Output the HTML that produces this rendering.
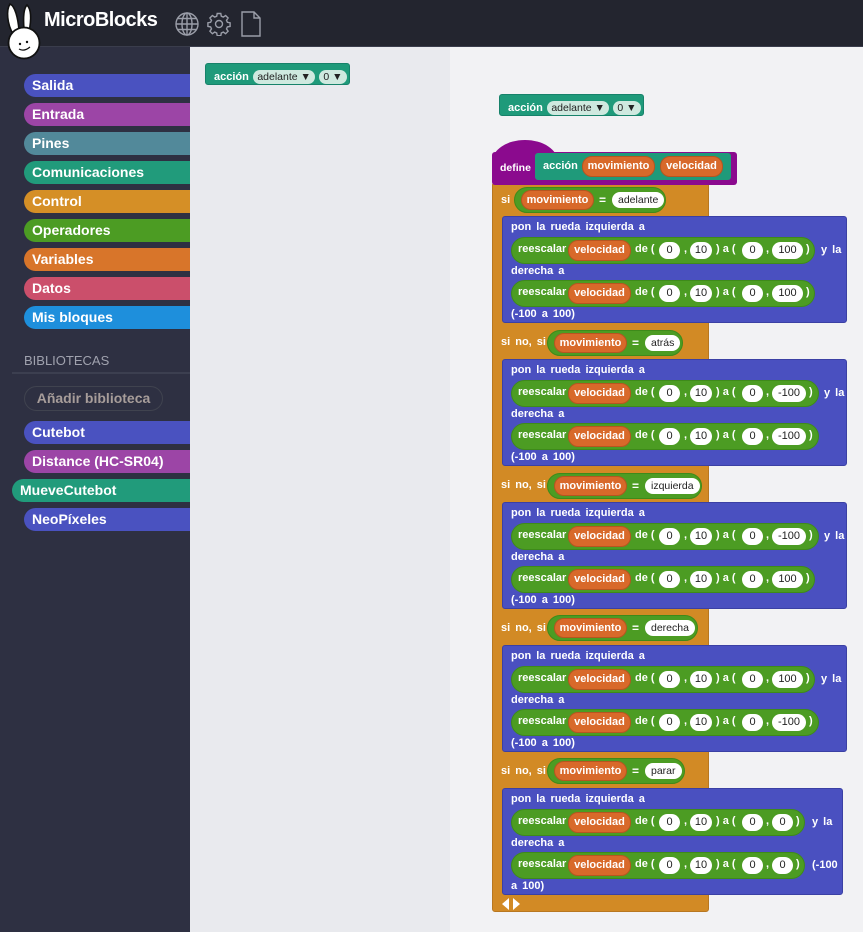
<!DOCTYPE html>
<html><head><meta charset="utf-8">
<style>
*{margin:0;padding:0;box-sizing:border-box}
body{width:863px;height:932px;overflow:hidden;background:#f2f2f4;font-family:"Liberation Sans",sans-serif;position:relative}
.abs{position:absolute}
#top{left:0;top:0;width:863px;height:47px;background:#23252f;border-bottom:1px solid #3a3d4c}
#side{left:0;top:47px;width:190px;height:885px;background:#2e3042}
#pal{left:190px;top:47px;width:260px;height:885px;background:#e9eaee}
.cat{position:absolute;left:24px;width:166px;height:23px;border-radius:12px 0 0 12px;color:#fff;font-weight:bold;font-size:14px;line-height:23px;padding-left:8px}
.b{font-weight:bold;font-size:11px;color:#fff;word-spacing:2px;white-space:nowrap}
.blue{position:absolute;left:502px;width:345px;height:107px;background:#4a50c0;border-radius:3px;border:1px solid #3b40a4}
.blue>.b{position:absolute;left:8px}
.rp{position:absolute;left:8px;height:27px;background:#4c9c23;border-radius:14px;border:1px solid #3e8a1a}
.rp .t{position:absolute;top:5px;font-weight:bold;font-size:11px;color:#fff;white-space:nowrap}
.rp .v{position:absolute;top:2px;height:21px;width:63px;background:#d8692a;border:1px solid #b65520;border-radius:10px;color:#fff;font-weight:bold;font-size:11px;line-height:19px;text-align:center}
.rp .c{position:absolute;top:4px;height:17px;background:#fff;border-radius:9px;color:#222;font-size:11px;line-height:17px;text-align:center}
.cond{position:absolute;height:26px;background:#4c9c23;border:1px solid #3e8a1a;border-radius:13px}
.cond .v{position:absolute;left:6px;top:2px;height:20px;width:73px;background:#d8692a;border:1px solid #b65520;border-radius:10px;color:#fff;font-weight:bold;font-size:11px;line-height:18px;text-align:center}
.cond .eq{position:absolute;left:84px;top:5px;color:#fff;font-weight:bold;font-size:12px}
.cond .w{position:absolute;left:97px;top:4px;height:16px;background:#fff;border-radius:8px;color:#222;font-size:10.5px;line-height:16px;padding:0 6px}
.lbl{position:absolute;font-weight:bold;font-size:11px;color:#fff;word-spacing:2px}
.dd{background:#cfe9df;border-radius:8px;color:#222;font-size:10.5px;padding:0 4px;height:14px;line-height:14px;display:inline-block}
</style></head><body>
<div class="abs" id="top"></div>
<div class="abs" id="side"></div>
<div class="abs" id="pal"></div>

<!-- logo -->
<svg class="abs" style="left:3px;top:2px" width="42" height="58" viewBox="0 0 42 58">
<path d="M10 32 C4 22 3 8 7 2 C12 4 15 16 16 28 M21 27 C20 15 21 6 24 3 C29 8 28 20 26 30" fill="#fff" stroke="#111" stroke-width="1.6"/>
<circle cx="21" cy="41" r="15.5" fill="#fff" stroke="#111" stroke-width="1.8"/>
<circle cx="17" cy="42" r="1.2" fill="#111"/><circle cx="24" cy="40" r="1.2" fill="#111"/>
<path d="M16 47 Q21 50 27 45" fill="none" stroke="#111" stroke-width="1.2"/>
</svg>
<div class="abs" style="left:44px;top:9px;color:#fff;font-weight:bold;font-size:20px;letter-spacing:-0.5px">MicroBlocks</div>
<svg class="abs" style="left:175px;top:12px" width="24" height="24" viewBox="0 0 24 24" fill="none" stroke="#9a9da8" stroke-width="1.4"><circle cx="12" cy="12" r="11"/><ellipse cx="12" cy="12" rx="5" ry="11"/><line x1="12" y1="1" x2="12" y2="23"/><line x1="1" y1="12" x2="23" y2="12"/><path d="M3 6.5H21M3 17.5H21"/></svg>
<svg class="abs" style="left:207px;top:12px" width="24" height="24" viewBox="0 0 24 24" fill="none" stroke="#9a9da8" stroke-width="1.4"><circle cx="12" cy="12" r="3.5"/><path d="M10.2 1.5h3.6l.5 2.7 2 .9 2.3-1.6 2.5 2.5-1.6 2.3.9 2 2.7.5v3.6l-2.7.5-.9 2 1.6 2.3-2.5 2.5-2.3-1.6-2 .9-.5 2.7h-3.6l-.5-2.7-2-.9-2.3 1.6-2.5-2.5 1.6-2.3-.9-2-2.7-.5v-3.6l2.7-.5.9-2-1.6-2.3 2.5-2.5 2.3 1.6 2-.9z"/></svg>
<svg class="abs" style="left:240px;top:11px" width="22" height="26" viewBox="0 0 22 26" fill="none" stroke="#9a9da8" stroke-width="1.4"><path d="M2 1h12l6 6v18H2z M14 1v6h6"/></svg>

<!-- categories -->
<div class="cat" style="top:74px;background:#4a52c0">Salida</div>
<div class="cat" style="top:103px;background:#9c45a6">Entrada</div>
<div class="cat" style="top:132px;background:#52899a">Pines</div>
<div class="cat" style="top:161px;background:#219b7b">Comunicaciones</div>
<div class="cat" style="top:190px;background:#d58f26">Control</div>
<div class="cat" style="top:219px;background:#4c9c23">Operadores</div>
<div class="cat" style="top:248px;background:#d8752a">Variables</div>
<div class="cat" style="top:277px;background:#cb4f6b">Datos</div>
<div class="cat" style="top:306px;background:#1e8fdc">Mis bloques</div>
<div class="abs" style="left:24px;top:353px;color:#a0a2ae;font-size:13px">BIBLIOTECAS</div>
<div class="abs" style="left:12px;top:372px;width:178px;height:2px;background:#3c3f50"></div>
<div class="abs" style="left:24px;top:386px;width:139px;height:25px;border:1px solid #40434f;border-radius:13px;color:#a79d9a;font-weight:bold;font-size:14px;line-height:23px;text-align:center">Añadir biblioteca</div>
<div class="cat" style="top:421px;background:#4a52c0">Cutebot</div>
<div class="cat" style="top:450px;background:#9c45a6">Distance (HC-SR04)</div>
<div class="cat" style="top:479px;left:12px;width:178px;background:#219b7b">MueveCutebot</div>
<div class="cat" style="top:508px;background:#4a52c0">NeoPíxeles</div>

<!-- palette block -->
<div class="abs" style="left:205px;top:63px;width:145px;height:22px;background:#1f9a7a;border-radius:3px;border:1px solid #17826a;padding:3px 0 0 8px" ><span class="b">acción</span> <span class="dd">adelante ▼</span> <span class="dd">0 ▼</span></div>
<div class="abs" style="left:499px;top:94px;width:145px;height:22px;background:#1f9a7a;border-radius:3px;border:1px solid #17826a;padding:3px 0 0 8px" ><span class="b">acción</span> <span class="dd">adelante ▼</span> <span class="dd">0 ▼</span></div>

<!-- orange C -->
<div class="abs" style="left:492px;top:182px;width:217px;height:730px;background:#d28a25;border-radius:3px;border:1px solid #b87720"></div>
<!-- hat -->
<div class="abs" style="left:492px;top:140px;width:66px;height:40px;background:#8b0a8e;border-radius:33px 33px 0 0 / 22px 22px 0 0"></div>
<div class="abs" style="left:492px;top:152px;width:245px;height:33px;background:#8b0a8e;border-radius:3px"></div>
<div class="lbl" style="left:500px;top:162px;font-size:10.5px">define</div>
<div class="abs" style="left:535px;top:153px;width:196px;height:27px;background:#1f9a7a;border-radius:3px"></div>
<div class="lbl" style="left:543px;top:160px">acción</div>
<div class="abs" style="left:582px;top:156px;width:73px;height:21px;background:#d8692a;border:1px solid #b65520;border-radius:10px;color:#fff;font-weight:bold;font-size:11px;line-height:19px;text-align:center">movimiento</div>
<div class="abs" style="left:660px;top:156px;width:63px;height:21px;background:#d8692a;border:1px solid #b65520;border-radius:10px;color:#fff;font-weight:bold;font-size:11px;line-height:19px;text-align:center">velocidad</div>

<!-- conditions -->
<div class="lbl" style="left:501px;top:194px">si</div>
<div class="cond" style="left:514px;top:187px;width:152px"><div class="v">movimiento</div><div class="eq">=</div><div class="w">adelante</div></div>
<div class="lbl" style="left:501px;top:336px">si no, si</div>
<div class="cond" style="left:547px;top:330px;width:136px"><div class="v">movimiento</div><div class="eq">=</div><div class="w">atrás</div></div>
<div class="lbl" style="left:501px;top:479px">si no, si</div>
<div class="cond" style="left:547px;top:473px;width:155px"><div class="v">movimiento</div><div class="eq">=</div><div class="w">izquierda</div></div>
<div class="lbl" style="left:501px;top:622px">si no, si</div>
<div class="cond" style="left:547px;top:615px;width:151px"><div class="v">movimiento</div><div class="eq">=</div><div class="w">derecha</div></div>
<div class="lbl" style="left:501px;top:765px">si no, si</div>
<div class="cond" style="left:547px;top:758px;width:138px"><div class="v">movimiento</div><div class="eq">=</div><div class="w">parar</div></div>

<!-- block 1 -->
<div class="blue" style="top:216px">
<div class="b" style="top:4px">pon la rueda izquierda a</div>
<div class="rp" style="top:20px;width:304px"><span class="t" style="left:6px">reescalar</span><span class="v" style="left:56px">velocidad</span><span class="t" style="left:123px">de (</span><span class="c" style="left:147px;width:21px">0</span><span class="t" style="left:172px">,</span><span class="c" style="left:178px;width:22px">10</span><span class="t" style="left:204px">) a (</span><span class="c" style="left:230px;width:21px">0</span><span class="t" style="left:254px">,</span><span class="c" style="left:260px;width:31px">100</span><span class="t" style="left:294px">)</span></div>
<div class="b" style="top:27px;left:318px">y la</div>
<div class="b" style="top:48px">derecha a</div>
<div class="rp" style="top:63px;width:304px"><span class="t" style="left:6px">reescalar</span><span class="v" style="left:56px">velocidad</span><span class="t" style="left:123px">de (</span><span class="c" style="left:147px;width:21px">0</span><span class="t" style="left:172px">,</span><span class="c" style="left:178px;width:22px">10</span><span class="t" style="left:204px">) a (</span><span class="c" style="left:230px;width:21px">0</span><span class="t" style="left:254px">,</span><span class="c" style="left:260px;width:31px">100</span><span class="t" style="left:294px">)</span></div>
<div class="b" style="top:91px">(-100 a 100)</div>
</div>

<!-- block 2 -->
<div class="blue" style="top:359px">
<div class="b" style="top:4px">pon la rueda izquierda a</div>
<div class="rp" style="top:20px;width:308px"><span class="t" style="left:6px">reescalar</span><span class="v" style="left:56px">velocidad</span><span class="t" style="left:123px">de (</span><span class="c" style="left:147px;width:21px">0</span><span class="t" style="left:172px">,</span><span class="c" style="left:178px;width:22px">10</span><span class="t" style="left:204px">) a (</span><span class="c" style="left:230px;width:21px">0</span><span class="t" style="left:254px">,</span><span class="c" style="left:260px;width:34px">-100</span><span class="t" style="left:297px">)</span></div>
<div class="b" style="top:27px;left:321px">y la</div>
<div class="b" style="top:48px">derecha a</div>
<div class="rp" style="top:63px;width:308px"><span class="t" style="left:6px">reescalar</span><span class="v" style="left:56px">velocidad</span><span class="t" style="left:123px">de (</span><span class="c" style="left:147px;width:21px">0</span><span class="t" style="left:172px">,</span><span class="c" style="left:178px;width:22px">10</span><span class="t" style="left:204px">) a (</span><span class="c" style="left:230px;width:21px">0</span><span class="t" style="left:254px">,</span><span class="c" style="left:260px;width:34px">-100</span><span class="t" style="left:297px">)</span></div>
<div class="b" style="top:91px">(-100 a 100)</div>
</div>

<!-- block 3 -->
<div class="blue" style="top:502px">
<div class="b" style="top:4px">pon la rueda izquierda a</div>
<div class="rp" style="top:20px;width:308px"><span class="t" style="left:6px">reescalar</span><span class="v" style="left:56px">velocidad</span><span class="t" style="left:123px">de (</span><span class="c" style="left:147px;width:21px">0</span><span class="t" style="left:172px">,</span><span class="c" style="left:178px;width:22px">10</span><span class="t" style="left:204px">) a (</span><span class="c" style="left:230px;width:21px">0</span><span class="t" style="left:254px">,</span><span class="c" style="left:260px;width:34px">-100</span><span class="t" style="left:297px">)</span></div>
<div class="b" style="top:27px;left:321px">y la</div>
<div class="b" style="top:48px">derecha a</div>
<div class="rp" style="top:63px;width:304px"><span class="t" style="left:6px">reescalar</span><span class="v" style="left:56px">velocidad</span><span class="t" style="left:123px">de (</span><span class="c" style="left:147px;width:21px">0</span><span class="t" style="left:172px">,</span><span class="c" style="left:178px;width:22px">10</span><span class="t" style="left:204px">) a (</span><span class="c" style="left:230px;width:21px">0</span><span class="t" style="left:254px">,</span><span class="c" style="left:260px;width:31px">100</span><span class="t" style="left:294px">)</span></div>
<div class="b" style="top:91px">(-100 a 100)</div>
</div>

<!-- block 4 -->
<div class="blue" style="top:645px">
<div class="b" style="top:4px">pon la rueda izquierda a</div>
<div class="rp" style="top:20px;width:304px"><span class="t" style="left:6px">reescalar</span><span class="v" style="left:56px">velocidad</span><span class="t" style="left:123px">de (</span><span class="c" style="left:147px;width:21px">0</span><span class="t" style="left:172px">,</span><span class="c" style="left:178px;width:22px">10</span><span class="t" style="left:204px">) a (</span><span class="c" style="left:230px;width:21px">0</span><span class="t" style="left:254px">,</span><span class="c" style="left:260px;width:31px">100</span><span class="t" style="left:294px">)</span></div>
<div class="b" style="top:27px;left:318px">y la</div>
<div class="b" style="top:48px">derecha a</div>
<div class="rp" style="top:63px;width:308px"><span class="t" style="left:6px">reescalar</span><span class="v" style="left:56px">velocidad</span><span class="t" style="left:123px">de (</span><span class="c" style="left:147px;width:21px">0</span><span class="t" style="left:172px">,</span><span class="c" style="left:178px;width:22px">10</span><span class="t" style="left:204px">) a (</span><span class="c" style="left:230px;width:21px">0</span><span class="t" style="left:254px">,</span><span class="c" style="left:260px;width:34px">-100</span><span class="t" style="left:297px">)</span></div>
<div class="b" style="top:91px">(-100 a 100)</div>
</div>

<!-- block 5 -->
<div class="blue" style="top:788px;width:341px">
<div class="b" style="top:4px">pon la rueda izquierda a</div>
<div class="rp" style="top:20px;width:294px"><span class="t" style="left:6px">reescalar</span><span class="v" style="left:56px">velocidad</span><span class="t" style="left:123px">de (</span><span class="c" style="left:147px;width:21px">0</span><span class="t" style="left:172px">,</span><span class="c" style="left:178px;width:22px">10</span><span class="t" style="left:204px">) a (</span><span class="c" style="left:230px;width:21px">0</span><span class="t" style="left:254px">,</span><span class="c" style="left:260px;width:21px">0</span><span class="t" style="left:284px">)</span></div>
<div class="b" style="top:27px;left:309px">y la</div>
<div class="b" style="top:48px">derecha a</div>
<div class="rp" style="top:63px;width:294px"><span class="t" style="left:6px">reescalar</span><span class="v" style="left:56px">velocidad</span><span class="t" style="left:123px">de (</span><span class="c" style="left:147px;width:21px">0</span><span class="t" style="left:172px">,</span><span class="c" style="left:178px;width:22px">10</span><span class="t" style="left:204px">) a (</span><span class="c" style="left:230px;width:21px">0</span><span class="t" style="left:254px">,</span><span class="c" style="left:260px;width:21px">0</span><span class="t" style="left:284px">)</span></div>
<div class="b" style="top:70px;left:309px">(-100</div>
<div class="b" style="top:91px">a 100)</div>
</div>

<!-- arrows -->
<svg class="abs" style="left:500px;top:897px" width="22" height="14" viewBox="0 0 22 14"><path d="M9 1 L2 7 L9 13Z M13 1 L20 7 L13 13Z" fill="#fff"/></svg>
</body></html>
